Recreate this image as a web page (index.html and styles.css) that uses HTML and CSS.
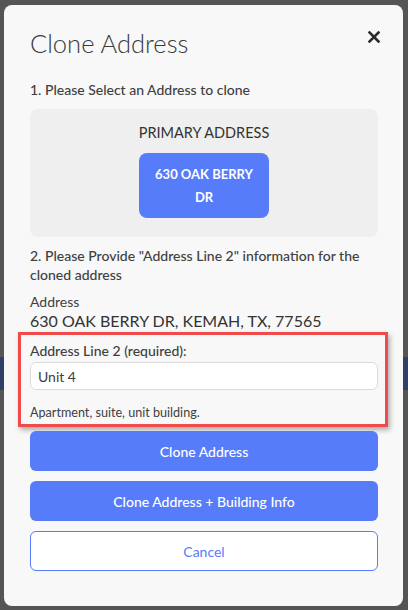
FILE: index.html
```html
<!DOCTYPE html>
<html lang="en">
<head>
    <meta charset="UTF-8">
    <meta name="viewport" content="width=device-width, initial-scale=1.0">
    <title>Clone Address</title>
    <link rel="stylesheet" href="styles.css">
</head>
<body>
    <div class="backdrop">
        <div class="modal">
            <div class="modal-header">
                <h2>Clone Address</h2>
                <button class="close-btn" aria-label="Close">
                    <svg width="12" height="12" viewBox="0 0 12 12">
                        <path d="M1.5 1.5 L10.5 10.5 M10.5 1.5 L1.5 10.5" stroke="#2b2b2b" stroke-width="2.6" stroke-linecap="square"/>
                    </svg>
                </button>
            </div>

            <!-- Step 1 -->
            <p class="step">1. Please Select an Address to clone</p>
            <div class="address-picker">
                <div class="picker-title">PRIMARY ADDRESS</div>
                <button class="address-option">630 OAK BERRY DR</button>
            </div>

            <!-- Step 2 -->
            <p class="step step-two">2. Please Provide "Address Line 2" information for the cloned address</p>
            <div class="address-info">
                <div class="info-label">Address</div>
                <div class="info-value">630 OAK BERRY DR, KEMAH, TX, 77565</div>
            </div>

            <div class="highlight">
                <label for="line2">Address Line 2 (required):</label>
                <input type="text" id="line2" value="Unit 4">
                <div class="hint">Apartment, suite, unit building.</div>
            </div>

            <div class="actions">
                <button class="btn btn-primary">Clone Address</button>
                <button class="btn btn-primary">Clone Address + Building Info</button>
                <button class="btn btn-outline">Cancel</button>
            </div>
        </div>
    </div>
</body>
</html>
```

FILE: styles.css
```css
body {
    margin: 0;
    padding: 0;
    font-family: Lato, "Open Sans", sans-serif;
    background-color: #555555;
}

.backdrop {
    height: 610px;
    padding: 5px 5px 0 4px;
    box-sizing: border-box;
    background: linear-gradient(to bottom, #555555 0, #555555 357px, #2f3f66 357px, #2f3f66 390px, #555555 390px);
}

.modal {
    width: 399px;
    height: 601px;
    box-sizing: border-box;
    background-color: #f8f8f8;
    border-radius: 8px;
    padding: 22px 25px 0 26px;
}

.modal-header {
    display: flex;
    justify-content: space-between;
    align-items: flex-start;
}

.modal-header h2 {
    margin: 0;
    font-size: 25.5px;
    line-height: 32px;
    font-weight: 300;
    color: #3a3a3a;
}

.close-btn {
    background: none;
    border: none;
    padding: 0;
    margin: 4px -2px 0 0;
    cursor: pointer;
    display: flex;
}

.step {
    margin: 21px 0 0;
    font-size: 14px;
    line-height: 19px;
    font-weight: 500;
    color: #404040;
}

.address-picker {
    margin-top: 10px;
    height: 128px;
    box-sizing: border-box;
    background-color: #efefef;
    border-radius: 8px;
    padding-top: 14px;
    display: flex;
    flex-direction: column;
    align-items: center;
}

.picker-title {
    font-size: 14.5px;
    line-height: 20px;
    color: #333333;
}

.address-option {
    margin-top: 10px;
    width: 130px;
    height: 65px;
    background-color: #577cf9;
    color: white;
    border: none;
    border-radius: 8px;
    font-family: inherit;
    font-size: 13px;
    font-weight: bold;
    line-height: 23px;
    padding: 0 14px;
}

.step-two {
    margin-top: 9px;
}

.address-info {
    margin-top: 9px;
}

.info-label {
    font-size: 14px;
    line-height: 18px;
    color: #404040;
}

.info-value {
    font-size: 16px;
    line-height: 20px;
    color: #333333;
}

.highlight {
    margin: 1px -10px 0 -12px;
    padding: 6px 7px 2px 9px;
    border: 3px solid #f04a4a;
    box-shadow: 2px 3px 5px rgba(0, 0, 0, 0.3);
    display: flex;
    flex-direction: column;
}

.highlight label {
    font-size: 14px;
    line-height: 19px;
    font-weight: 500;
    color: #404040;
}

.highlight input {
    margin-top: 2px;
    height: 28px;
    box-sizing: border-box;
    border: 1px solid #dcdcdc;
    border-radius: 6px;
    background-color: white;
    padding: 0 7px;
    font-family: inherit;
    font-size: 14px;
    color: #404040;
}

.hint {
    margin-top: 14px;
    font-size: 12.6px;
    line-height: 18px;
    color: #404040;
}

.actions {
    margin-top: 4px;
    display: flex;
    flex-direction: column;
    gap: 10px;
}

.btn {
    height: 40px;
    border-radius: 6px;
    font-family: inherit;
    font-size: 14px;
    cursor: pointer;
}

.btn-primary {
    background-color: #577cf9;
    color: white;
    border: none;
    font-weight: 500;
}

.btn-outline {
    background-color: white;
    color: #577cf9;
    border: 1px solid #577cf9;
}
```
